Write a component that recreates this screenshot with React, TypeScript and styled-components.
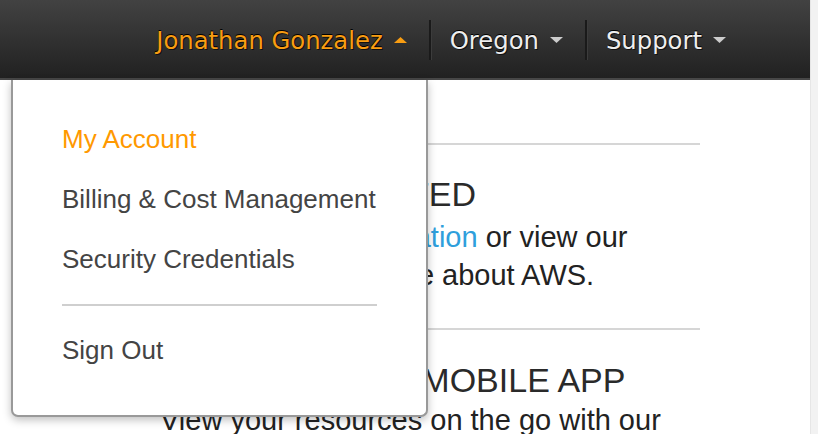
import { FC } from 'react';
import styled, { createGlobalStyle } from 'styled-components';

const GlobalStyle = createGlobalStyle`
  html, body {
    margin: 0;
    padding: 0;
    background: #ffffff;
  }
  body {
    font-family: "Liberation Sans", Arial, sans-serif;
  }
`;

const Page = styled.div`
  display: flex;
  width: 818px;
  height: 434px;
  overflow: hidden;
`;

const Main = styled.div`
  position: relative;
  flex: 1;
  display: flex;
  flex-direction: column;
`;

const ScrollTrack = styled.div`
  width: 7px;
  background: #f2f2f2;
  border-left: 1px solid #e6e6e6;
`;

const TopBar = styled.header`
  display: flex;
  flex-shrink: 0;
  align-items: center;
  justify-content: flex-end;
  box-sizing: border-box;
  height: 80px;
  padding: 2px 62px 0 0;
  background: linear-gradient(#424242, #212121);
  border-bottom: 2px solid #474747;
`;

const NavItem = styled.div<{ $active?: boolean }>`
  display: flex;
  align-items: center;
  gap: 11px;
  padding: 0 22px 0 18px;
  font-family: "DejaVu Sans", Verdana, sans-serif;
  font-size: 24.3px;
  color: ${(p) => (p.$active ? '#f89d12' : '#eeeeee')};
  text-shadow: 0 -1px 0 #000000, 1px 1px 0 #111111;
`;

const Separator = styled.div`
  width: 2px;
  height: 40px;
  background: #1a1a1a;
  border-right: 1px solid #3c3c3c;
`;

const Caret: FC<{ up?: boolean; color: string }> = ({ up, color }) => (
  <svg width="13" height="8" viewBox="0 0 13 8">
    <path d={up ? 'M0 7 L6.5 1 L13 7 Z' : 'M0 1 L6.5 7 L13 1 Z'} fill={color} />
  </svg>
);

const Content = styled.div`
  padding-left: 160px;
  width: 540px;
`;

const Rule = styled.hr<{ $top: number }>`
  margin: ${(p) => p.$top}px 0 0;
  border: 0;
  height: 2px;
  background: #d6d6d6;
`;

const Heading = styled.h2<{ $top: number }>`
  margin: ${(p) => p.$top}px 0 0;
  font-weight: normal;
  font-size: 34px;
  line-height: 36px;
  color: #2a2a2a;
  white-space: nowrap;
`;

const Text = styled.p<{ $top: number }>`
  margin: ${(p) => p.$top}px 0 0;
  font-size: 29px;
  line-height: 38px;
  color: #222222;
  white-space: nowrap;
`;

const Link = styled.a`
  color: #2f9fdc;
  text-decoration: none;
`;

const Dropdown = styled.div`
  position: absolute;
  top: 80px;
  left: 11px;
  width: 417px;
  box-sizing: border-box;
  padding: 29px 0 35px;
  background: #ffffff;
  border: 1px solid #999999;
  border-width: 0 2px 2px 2px;
  border-radius: 0 0 7px 7px;
  box-shadow: 0 3px 8px rgba(0, 0, 0, 0.25);
`;

const MenuItem = styled.a<{ $active?: boolean }>`
  display: block;
  padding-left: 49px;
  height: 60px;
  line-height: 60px;
  font-size: 26px;
  color: ${(p) => (p.$active ? '#ff9900' : '#444444')};
  text-decoration: none;
`;

const MenuDivider = styled.div`
  height: 2px;
  margin: 15px 49px 14px;
  background: #cfcfcf;
`;

export default function App() {
  return (
    <>
      <GlobalStyle />
      <Page>
        <Main>
          <TopBar>
            <NavItem $active>
              Jonathan Gonzalez
              <Caret up color="#f89d12" />
            </NavItem>
            <Separator />
            <NavItem>
              Oregon
              <Caret color="#cccccc" />
            </NavItem>
            <Separator />
            <NavItem>
              Support
              <Caret color="#cccccc" />
            </NavItem>
          </TopBar>

          <Content>
            <Rule $top={63} />
            <Heading $top={31}>GETTING STARTED</Heading>
            <Text $top={6}>
              Read our <Link href="#">documentation</Link> or view our
              <br />
              training to learn more about AWS.
            </Text>
            <Rule $top={34} />
            <Heading $top={32}>AWS CONSOLE MOBILE APP</Heading>
            <Text $top={3}>View your resources on the go with our</Text>
          </Content>

          <Dropdown>
            <MenuItem href="#" $active>My Account</MenuItem>
            <MenuItem href="#">Billing &amp; Cost Management</MenuItem>
            <MenuItem href="#">Security Credentials</MenuItem>
            <MenuDivider />
            <MenuItem href="#">Sign Out</MenuItem>
          </Dropdown>
        </Main>
        <ScrollTrack />
      </Page>
    </>
  );
}
